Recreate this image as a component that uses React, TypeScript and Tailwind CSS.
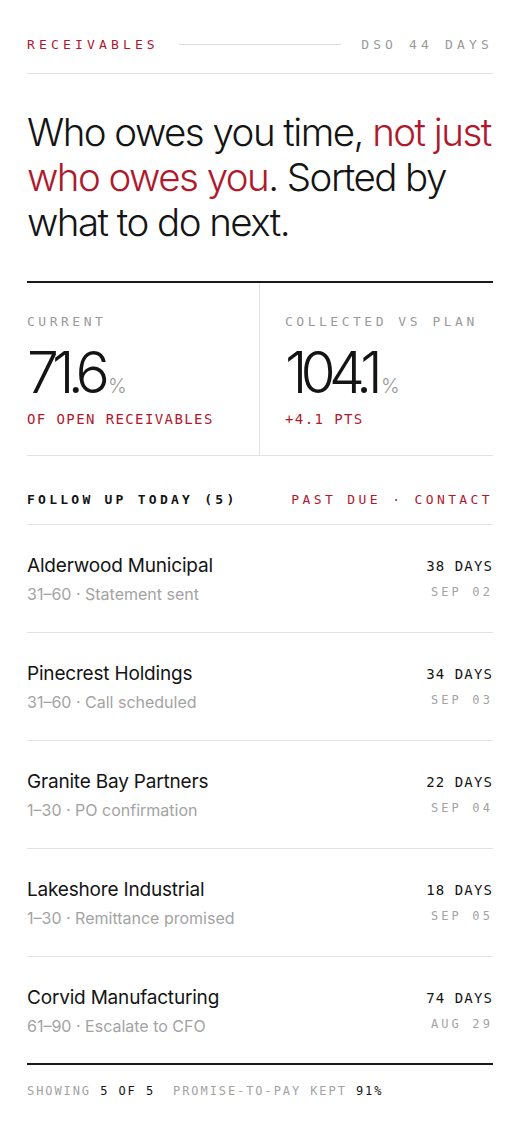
const mono = { fontFamily: '"DejaVu Sans Mono", "Liberation Mono", monospace' };

type Row = {
  name: string;
  bucket: string;
  note: string;
  days: number;
  date: string;
};

const rows: Row[] = [
  { name: 'Alderwood Municipal', bucket: '31–60', note: 'Statement sent', days: 38, date: 'SEP 02' },
  { name: 'Pinecrest Holdings', bucket: '31–60', note: 'Call scheduled', days: 34, date: 'SEP 03' },
  { name: 'Granite Bay Partners', bucket: '1–30', note: 'PO confirmation', days: 22, date: 'SEP 04' },
  { name: 'Lakeshore Industrial', bucket: '1–30', note: 'Remittance promised', days: 18, date: 'SEP 05' },
  { name: 'Corvid Manufacturing', bucket: '61–90', note: 'Escalate to CFO', days: 74, date: 'AUG 29' },
];

export default function App() {
  return (
    <div className="min-h-[1125px] bg-white px-[27px] text-[#141414] font-['Inter',sans-serif]">
      {/* top bar */}
      <div className="flex h-[74px] items-center gap-5 border-b border-[#e3e3e3] pt-[16px]">
        <span className="text-[13px] tracking-[0.32em] text-[#b0182c]" style={mono}>
          RECEIVABLES
        </span>
        <div className="h-px flex-1 bg-[#dcdcdc]" />
        <span className="text-[13px] tracking-[0.32em] text-[#9a9a9a]" style={mono}>
          DSO 44 DAYS
        </span>
      </div>

      <h1 className="border-b-2 border-[#1a1a1a] pt-[36px] pb-[36px] text-[38.5px] font-light leading-[45px] tracking-[-0.04em]">
        Who owes you time, <span className="text-[#b0182c]">not just who owes you</span>. Sorted by what to do next.
      </h1>

      {/* stats */}
      <div className="grid grid-cols-2 border-b border-[#e3e3e3]">
        <div className="border-r border-[#e3e3e3] pt-[29px] pb-[25px]">
          <div className="text-[13px] tracking-[0.27em] text-[#9a9a9a]" style={mono}>
            CURRENT
          </div>
          <div className="mt-[12px] flex items-baseline leading-none">
            <span className="text-[57px] font-light tracking-[-0.12em]">71.6</span>
            <span className="ml-[5px] text-[20px] font-light text-[#9a9a9a]">%</span>
          </div>
          <div className="mt-[8px] text-[14px] tracking-[0.1em] text-[#b0182c]" style={mono}>
            OF OPEN RECEIVABLES
          </div>
        </div>
        <div className="pl-[25px] pt-[29px] pb-[25px]">
          <div className="text-[13px] tracking-[0.27em] text-[#9a9a9a]" style={mono}>
            COLLECTED VS PLAN
          </div>
          <div className="mt-[12px] flex items-baseline leading-none">
            <span className="text-[57px] font-light tracking-[-0.12em]">104.1</span>
            <span className="ml-[5px] text-[20px] font-light text-[#9a9a9a]">%</span>
          </div>
          <div className="mt-[8px] text-[14px] tracking-[0.1em] text-[#b0182c]" style={mono}>
            +4.1 PTS
          </div>
        </div>
      </div>

      {/* section header */}
      <div className="flex h-[69px] items-center justify-between border-b border-[#e3e3e3] pt-[21px]">
        <span className="text-[13px] font-bold tracking-[0.25em]" style={mono}>
          FOLLOW UP TODAY (5)
        </span>
        <span className="text-[13px] tracking-[0.26em] text-[#b0182c]" style={mono}>
          PAST DUE · CONTACT
        </span>
      </div>

      {/* list */}
      <div>
        {rows.map((r, i) => (
          <div
            key={r.name}
            className={`flex h-[108px] items-start justify-between pt-[28px] ${
              i === rows.length - 1 ? 'border-b-2 border-[#1a1a1a]' : 'border-b border-[#e3e3e3]'
            }`}
          >
            <div>
              <div className="text-[19px] leading-[26px] tracking-[-0.01em]">{r.name}</div>
              <div className="mt-[4px] text-[16px] leading-[22px] text-[#a3a3a3]">
                {r.bucket} · {r.note}
              </div>
            </div>
            <div className="flex flex-col items-end">
              <div className="text-[14px] leading-[26px] tracking-[0.08em]" style={mono}>
                {r.days} DAYS
              </div>
              <div className="mt-[2px] text-[12px] leading-[22px] tracking-[0.26em] text-[#a3a3a3]" style={mono}>
                {r.date}
              </div>
            </div>
          </div>
        ))}
      </div>

      {/* footer */}
      <div className="pt-[17px] text-[12px] tracking-[0.16em] text-[#a3a3a3]" style={mono}>
        SHOWING <span className="text-[#141414]">5 OF 5</span>
        <span className="ml-[18px]">PROMISE-TO-PAY KEPT</span> <span className="text-[#141414]">91%</span>
      </div>
    </div>
  );
}
